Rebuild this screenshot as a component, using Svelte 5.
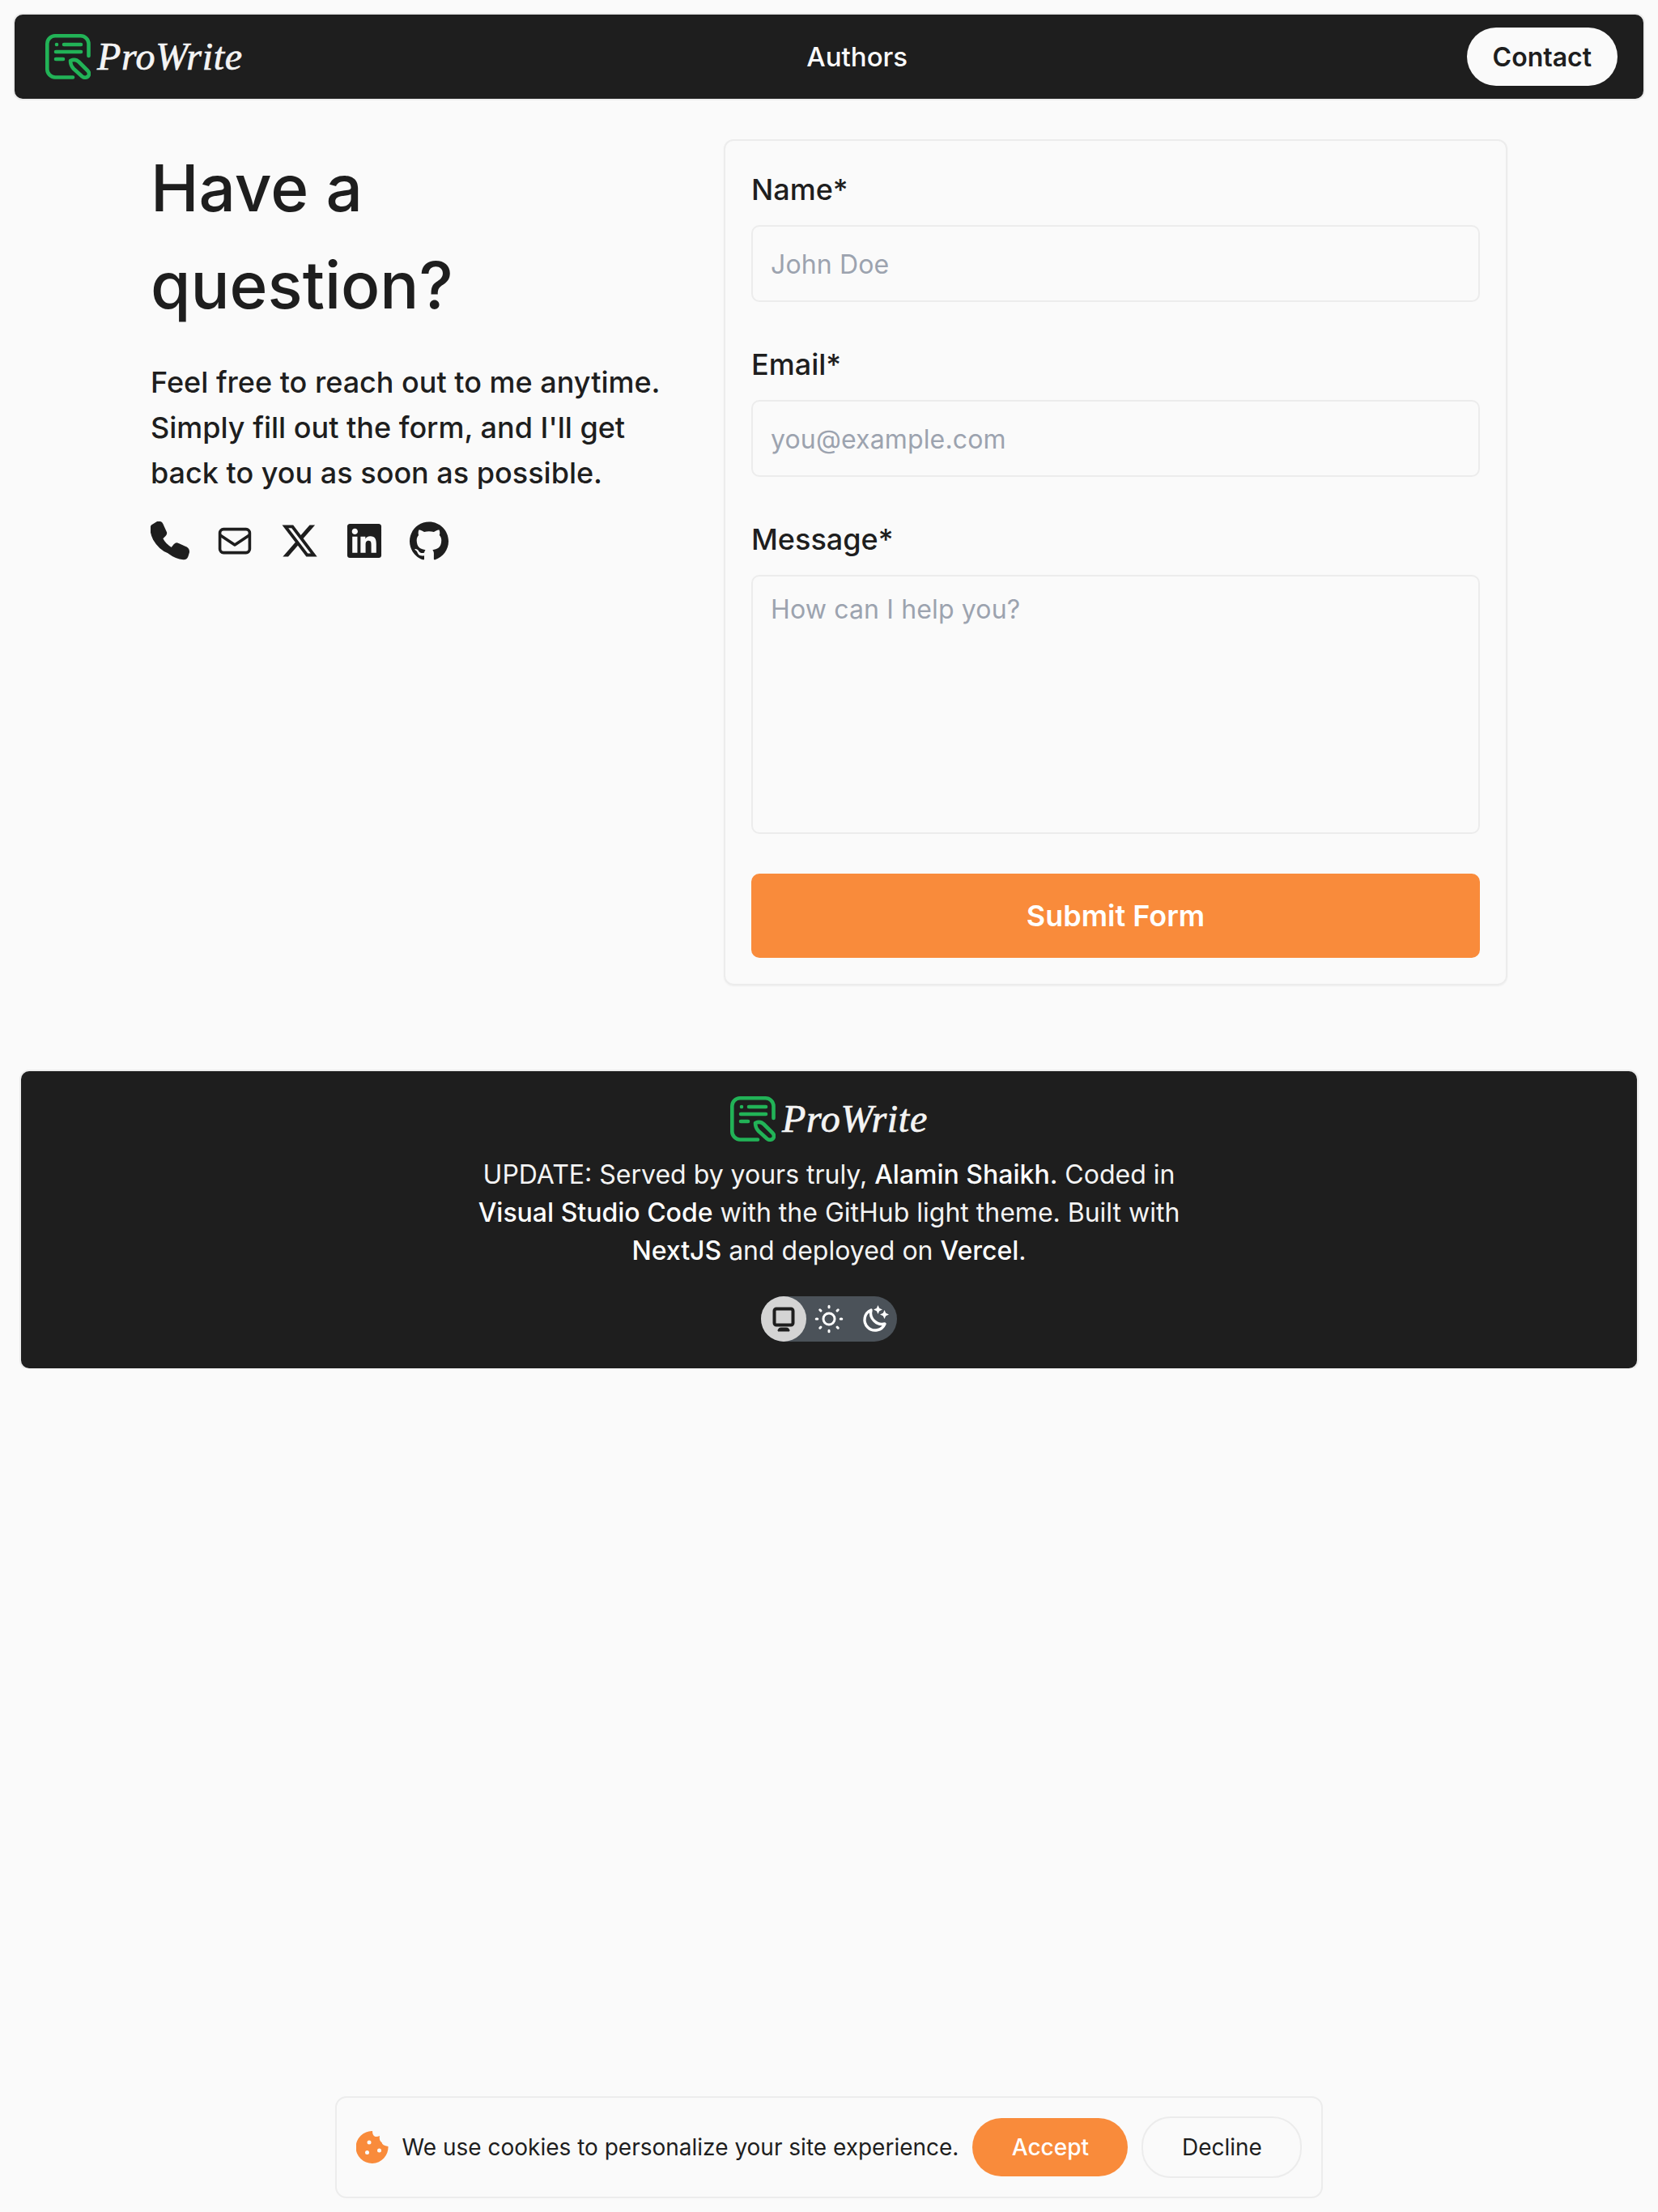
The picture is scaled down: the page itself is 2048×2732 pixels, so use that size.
<script>
	let name = $state('');
	let email = $state('');
	let message = $state('');
	let theme = $state('system');
	let showCookies = $state(true);
</script>

{#snippet logo()}
	<a class="logo" href="#top">
		<svg width="56" height="56" viewBox="0 0 56 56" fill="none" stroke="#22b357" stroke-width="4.600" stroke-linecap="round" stroke-linejoin="round" aria-hidden="true">
			<path d="M53.500 27V12A10 10 0 0 0 43.500 2.300H12A10 10 0 0 0 2.300 12V43.500A10 10 0 0 0 12 53.500H34" />
			<path d="M14 13h.01M23 13h21M13 22h31M13 31h9" />
			<path d="M31 33c4-2 8-1 10.500 1.500L52 45c2.500 2.500 2.500 5 1 7s-5 2.500-7.500.5L35 43c-3-3-4-6-4-10z" />
		</svg>
		<span class="logo-text">ProWrite</span>
	</a>
{/snippet}

<div class="page" id="top">
	<nav class="nav">
		{@render logo()}
		<a class="nav-link" href="#authors">Authors</a>
		<a class="contact" href="#contact">Contact</a>
	</nav>

	<main class="main">
		<section class="intro">
			<h1>Have a question?</h1>
			<p>Feel free to reach out to me anytime. Simply fill out the form, and I'll get back to you as soon as possible.</p>
			<div class="socials">
				<a href="#phone" aria-label="Phone">
					<svg width="48" height="48" viewBox="0 0 48 48" fill="#1e1e1e" stroke="#1e1e1e" stroke-width="3" stroke-linejoin="round">
						<path d="M2 5.500 8.500 1.500c2-.7 4.500-.2 5.500 2l4.500 10c.5 1.500 0 2.500-1 3.500l-4 4c1.500 3 3 5 5 7s4.500 4 7.500 6l4-5c1-1 2.500-1.300 3.500-.8l11 5c1.700 1 2 2.500 2 4.500l-1.500 5c-.7 2-2.500 3.200-4.500 3-6-.5-12-3-18-7.500C14 35 8.500 29 4.500 22 2 17 1 12 1 9c0-1.500.2-2.700 1-3.500z" />
					</svg>
				</a>
				<a href="#mail" aria-label="Email">
					<svg width="48" height="48" viewBox="0 0 48 48" fill="none" stroke="#1e1e1e" stroke-width="3.600" stroke-linecap="round" stroke-linejoin="round">
						<rect x="5.600" y="9.600" width="36.800" height="29" rx="4.500" />
						<path d="M6 17l18 12 18-12" />
					</svg>
				</a>
				<a href="#x" aria-label="X">
					<svg width="48" height="48" viewBox="0 0 24 24" fill="#1e1e1e">
						<path d="M18.244 2.250h3.308l-7.227 8.260 8.502 11.240H16.170l-5.214-6.817L4.990 21.750H1.680l7.730-8.835L1.254 2.250H8.080l4.713 6.231zm-1.161 17.520h1.833L7.084 4.126H5.117z" />
					</svg>
				</a>
				<a href="#linkedin" aria-label="LinkedIn">
					<svg width="48" height="48" viewBox="-1.700 -1.700 27.400 27.400" fill="#1e1e1e">
						<path d="M20.447 20.452h-3.554v-5.569c0-1.328-.027-3.037-1.852-3.037-1.853 0-2.136 1.445-2.136 2.939v5.667H9.351V9h3.414v1.561h.046c.477-.9 1.637-1.850 3.370-1.850 3.601 0 4.267 2.370 4.267 5.455v6.286zM5.337 7.433c-1.144 0-2.063-.926-2.063-2.065 0-1.138.920-2.063 2.063-2.063 1.140 0 2.064.925 2.064 2.063 0 1.139-.925 2.065-2.064 2.065zm1.782 13.019H3.555V9h3.564v11.452zM22.225 0H1.771C.792 0 0 .774 0 1.729v20.542C0 23.227.792 24 1.771 24h20.451C23.200 24 24 23.227 24 22.271V1.729C24 .774 23.200 0 22.222 0h.003z" />
					</svg>
				</a>
				<a href="#github" aria-label="GitHub">
					<svg width="48" height="48" viewBox="0 0 24 24" fill="#1e1e1e">
						<path d="M12 .297c-6.630 0-12 5.373-12 12 0 5.303 3.438 9.800 8.205 11.385.600.113.820-.258.820-.577 0-.285-.010-1.040-.015-2.040-3.338.724-4.042-1.610-4.042-1.610C4.422 18.070 3.633 17.700 3.633 17.700c-1.087-.744.084-.729.084-.729 1.205.084 1.838 1.236 1.838 1.236 1.070 1.835 2.809 1.305 3.495.998.108-.776.417-1.305.760-1.605-2.665-.300-5.466-1.332-5.466-5.930 0-1.310.465-2.380 1.235-3.220-.135-.303-.540-1.523.105-3.176 0 0 1.005-.322 3.300 1.230.960-.267 1.980-.399 3-.405 1.020.006 2.040.138 3 .405 2.280-1.552 3.285-1.230 3.285-1.230.645 1.653.240 2.873.120 3.176.765.840 1.230 1.910 1.230 3.220 0 4.610-2.805 5.625-5.475 5.920.420.360.810 1.096.810 2.220 0 1.606-.015 2.896-.015 3.286 0 .315.210.690.825.570C20.565 22.092 24 17.592 24 12.297c0-6.627-5.373-12-12-12" />
					</svg>
				</a>
			</div>
		</section>

		<form class="form" onsubmit={(e) => e.preventDefault()}>
			<label class="field">
				<span>Name*</span>
				<input type="text" placeholder="John Doe" bind:value={name} />
			</label>
			<label class="field">
				<span>Email*</span>
				<input type="email" placeholder="you@example.com" bind:value={email} />
			</label>
			<label class="field">
				<span>Message*</span>
				<textarea placeholder="How can I help you?" bind:value={message}></textarea>
			</label>
			<button class="submit" type="submit">Submit Form</button>
		</form>
	</main>

	<footer class="footer">
		{@render logo()}
		<p>UPDATE: Served by yours truly, <b>Alamin Shaikh.</b> Coded in <b>Visual Studio Code</b> with the GitHub light theme. Built with <b>NextJS</b> and deployed on <b>Vercel</b>.</p>
		<div class="themes">
			<button class:active={theme === 'system'} type="button" aria-label="System theme" onclick={() => (theme = 'system')}>
				<svg width="36" height="36" viewBox="0 0 36 36" fill="none" stroke="currentColor" stroke-width="4" stroke-linejoin="round">
					<rect x="6.500" y="5.500" width="23" height="20" rx="2.500" />
					<path d="M11 33c0-2.500 1.500-4 3.500-4h7c2 0 3.500 1.500 3.500 4z" fill="currentColor" stroke-width="1" />
				</svg>
			</button>
			<button class:active={theme === 'light'} type="button" aria-label="Light theme" onclick={() => (theme = 'light')}>
				<svg width="36" height="36" viewBox="0 0 36 36" fill="none" stroke="currentColor" stroke-width="3" stroke-linecap="round">
					<circle cx="18" cy="18" r="7" />
					<path d="M18 2.200v1.600M18 32.200v1.600M2.200 18h1.600M32.200 18h1.600M6.800 6.800l1.100 1.100M28.100 28.100l1.100 1.100M6.800 29.200l1.100-1.100M28.100 7.900l1.100-1.100" />
				</svg>
			</button>
			<button class:active={theme === 'dark'} type="button" aria-label="Dark theme" onclick={() => (theme = 'dark')}>
				<svg width="36" height="36" viewBox="0 0 36 36" fill="none" stroke="currentColor" stroke-width="3.400" stroke-linejoin="round">
					<path d="M14 7A13 13 0 1 0 31 24 A14 14 0 0 1 14 7Z" />
					<path d="M22.500 1l1.700 3.800 3.800 1.700-3.800 1.700-1.700 3.800-1.700-3.800L17 6.500l3.800-1.700zM30.500 7l1.700 3.800 3.800 1.700-3.800 1.700-1.700 3.800-1.700-3.800-3.800-1.700 3.800-1.700z" fill="currentColor" stroke="none" />
				</svg>
			</button>
		</div>
	</footer>
</div>

{#if showCookies}
	<aside class="cookies">
		<svg width="40" height="40" viewBox="0 0 40 40" aria-hidden="true">
			<path fill="#f98b3b" d="M20 0Q20 6 24 7Q27 7 29 6Q28 12 31.500 14Q32 18 39.500 19A20 20 0 1 1 20 0Z" />
			<circle cx="16" cy="14" r="2.500" fill="#fafafa" />
			<circle cx="13.500" cy="26.500" r="2.500" fill="#fafafa" />
			<circle cx="28.500" cy="24" r="2.500" fill="#fafafa" />
		</svg>
		<span class="cookie-text">We use cookies to personalize your site experience.</span>
		<button class="accept" type="button" onclick={() => (showCookies = false)}>Accept</button>
		<button class="decline" type="button" onclick={() => (showCookies = false)}>Decline</button>
	</aside>
{/if}

<style>
	:global(body) {
		background: #fafafa;
		color: #1e1e1e;
		font-family: Inter, "Noto Sans", sans-serif;
	}
	a {
		color: inherit;
		text-decoration: none;
	}
	button {
		font-family: inherit;
		cursor: pointer;
	}
	.page {
		display: flex;
		flex-direction: column;
		padding: 18px 18px 0;
	}
	.nav {
		display: flex;
		align-items: center;
		justify-content: space-between;
		height: 104px;
		padding: 0 32px 0 38px;
		box-sizing: border-box;
		background: #1e1e1e;
		border-radius: 10px;
		box-shadow: 0 0 0 2px #ececec;
		color: #fafafa;
	}
	.logo {
		display: flex;
		align-items: center;
		gap: 8px;
		color: #f4f4f4;
	}
	.logo-text {
		font-family: "Liberation Serif", serif;
		font-style: italic;
		font-size: 48px;
		line-height: 56px;
		letter-spacing: 0.7px;
		-webkit-text-stroke: 0.7px currentColor;
	}
	.nav-link {
		margin-left: 6px;
		font-size: 33px;
		font-weight: 500;
	}
	.contact {
		display: flex;
		align-items: center;
		height: 72px;
		padding: 0 32px;
		border-radius: 36px;
		background: #fafafa;
		color: #1e1e1e;
		font-size: 32px;
		font-weight: 600;
	}
	.main {
		display: flex;
		justify-content: space-between;
		align-items: flex-start;
		margin: 50px 168px 0;
	}
	.intro {
		width: 640px;
	}
	h1 {
		margin: 0;
		font-size: 80px;
		line-height: 120px;
		font-weight: 500;
	}
	.intro p {
		margin: 32px 0 0;
		font-size: 36px;
		line-height: 56px;
		font-weight: 500;
	}
	.socials {
		display: flex;
		gap: 32px;
		margin-top: 32px;
	}
	.socials a {
		display: block;
		height: 48px;
	}
	.form {
		display: flex;
		flex-direction: column;
		gap: 49px;
		width: 968px;
		box-sizing: border-box;
		padding: 32px;
		border: 2px solid #ececec;
		border-radius: 12px;
		box-shadow: 0 1px 2px rgba(0, 0, 0, 0.05);
	}
	.field {
		display: flex;
		flex-direction: column;
		gap: 16px;
		font-size: 36px;
		line-height: 56px;
		font-weight: 500;
	}
	input,
	textarea {
		display: block;
		width: 100%;
		box-sizing: border-box;
		border: 2px solid #ececec;
		border-radius: 10px;
		background: transparent;
		padding: 0 22px;
		font-family: inherit;
		font-size: 32px;
		letter-spacing: 0.15px;
		color: #1e1e1e;
		outline: none;
	}
	input {
		height: 95px;
		padding-top: 2px;
	}
	textarea {
		height: 320px;
		padding-top: 18px;
		line-height: 46px;
		resize: none;
	}
	::placeholder {
		color: #9ca3af;
		opacity: 1;
	}
	.submit {
		height: 104px;
		border: none;
		border-radius: 10px;
		background: #f98b3b;
		color: #fff;
		font-size: 36px;
		font-weight: 600;
	}
	.footer {
		display: flex;
		flex-direction: column;
		align-items: center;
		margin: 106px 8px 0;
		padding: 31px 0 33px;
		background: #1e1e1e;
		border-radius: 10px;
		box-shadow: 0 0 0 2px #ececec;
		color: #f4f4f4;
	}
	.footer p {
		width: 880px;
		margin: 17px 0 0;
		text-align: center;
		font-size: 32px;
		line-height: 47px;
	}
	.footer b {
		font-weight: 500;
		color: #fff;
	}
	.themes {
		display: flex;
		margin-top: 33px;
		background: #4b5259;
		border-radius: 28px;
	}
	.themes button {
		display: flex;
		align-items: center;
		justify-content: center;
		width: 56px;
		height: 56px;
		padding: 0;
		border: none;
		border-radius: 50%;
		background: transparent;
		color: #fff;
	}
	.themes button.active {
		background: #d4d4d4;
		color: #1e1e1e;
	}
	.cookies {
		position: fixed;
		left: 0;
		right: 0;
		bottom: 17px;
		display: flex;
		align-items: center;
		width: fit-content;
		margin: 0 auto;
		padding: 23px 23.500px;
		background: #fafafa;
		border: 2px solid #ececec;
		border-radius: 14px;
	}
	.cookie-text {
		margin-left: 17px;
		font-size: 28px;
	}
	.accept,
	.decline {
		height: 72px;
		border-radius: 36px;
		font-size: 28px;
	}
	.accept {
		width: 192px;
		margin-left: 17px;
		border: none;
		background: #f98b3b;
		color: #fff;
		font-weight: 500;
	}
	.decline {
		width: 198px;
		height: 76px;
		margin-left: 17px;
		border: 2px solid #ececec;
		background: transparent;
		color: #1e1e1e;
	}
</style>
